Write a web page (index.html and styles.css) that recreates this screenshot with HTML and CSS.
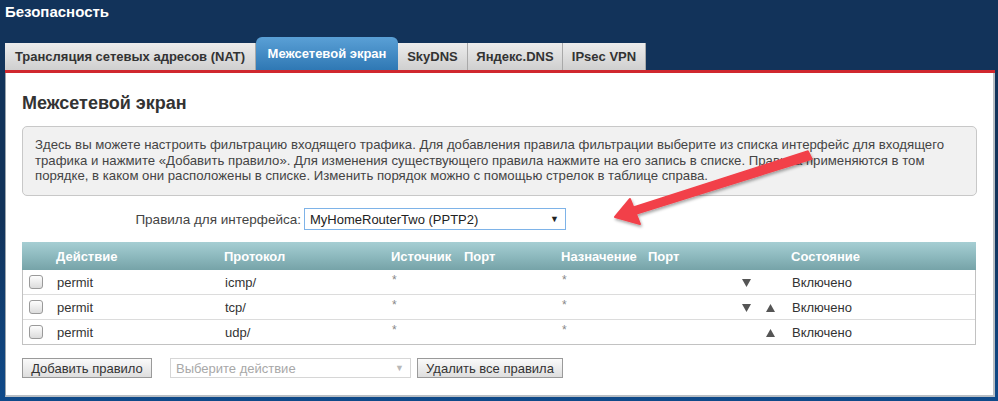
FILE: index.html
```html
<!DOCTYPE html>
<html lang="ru">
<head>
  <meta charset="UTF-8">
  <title>Безопасность</title>
  <link rel="stylesheet" href="styles.css">
</head>
<body>

<div class="page">
  <h1 class="page-title">Безопасность</h1>

  <div class="tabs">
    <div class="tab">Трансляция сетевых адресов (NAT)</div>
    <div class="tab active">Межсетевой экран</div>
    <div class="tab">SkyDNS</div>
    <div class="tab">Яндекс.DNS</div>
    <div class="tab">IPsec VPN</div>
  </div>

  <div class="panel">
    <h2>Межсетевой экран</h2>

    <div class="info">
      Здесь вы можете настроить фильтрацию входящего трафика. Для добавления правила фильтрации выберите из списка интерфейс для входящего<br>
      трафика и нажмите «Добавить правило». Для изменения существующего правила нажмите на его запись в списке. Правила применяются в том<br>
      порядке, в каком они расположены в списке. Изменить порядок можно с помощью стрелок в таблице справа.
    </div>

    <div class="iface-row">
      <label>Правила для интерфейса:</label>
      <div class="select focus">
        <span>MyHomeRouterTwo (PPTP2)</span>
        <span class="caret">&#9660;</span>
      </div>
    </div>

    <div class="rules">
      <div class="rules-head">
        <div></div>
        <div>Действие</div>
        <div>Протокол</div>
        <div>Источник</div>
        <div>Порт</div>
        <div>Назначение</div>
        <div>Порт</div>
        <div></div>
        <div></div>
        <div>Состояние</div>
      </div>
      <div class="rules-row">
        <div><span class="check"></span></div>
        <div>permit</div>
        <div>icmp/</div>
        <div class="star">*</div>
        <div></div>
        <div class="star">*</div>
        <div></div>
        <div class="arrow"><svg width="9" height="8" viewBox="0 0 9 8"><path d="M0 0H9L4.5 8Z" fill="#555"/></svg></div>
        <div class="arrow"></div>
        <div>Включено</div>
      </div>
      <div class="rules-row">
        <div><span class="check"></span></div>
        <div>permit</div>
        <div>tcp/</div>
        <div class="star">*</div>
        <div></div>
        <div class="star">*</div>
        <div></div>
        <div class="arrow"><svg width="9" height="8" viewBox="0 0 9 8"><path d="M0 0H9L4.5 8Z" fill="#555"/></svg></div>
        <div class="arrow"><svg width="9" height="8" viewBox="0 0 9 8"><path d="M0 8H9L4.5 0Z" fill="#555"/></svg></div>
        <div>Включено</div>
      </div>
      <div class="rules-row">
        <div><span class="check"></span></div>
        <div>permit</div>
        <div>udp/</div>
        <div class="star">*</div>
        <div></div>
        <div class="star">*</div>
        <div></div>
        <div class="arrow"></div>
        <div class="arrow"><svg width="9" height="8" viewBox="0 0 9 8"><path d="M0 8H9L4.5 0Z" fill="#555"/></svg></div>
        <div>Включено</div>
      </div>
    </div>

    <div class="actions">
      <button class="btn">Добавить правило</button>
      <div class="select disabled">
        <span>Выберите действие</span>
        <span class="caret">&#9660;</span>
      </div>
      <button class="btn">Удалить все правила</button>
    </div>
  </div>
</div>

<svg class="callout" width="998" height="401" viewBox="0 0 998 401">
  <defs>
    <filter id="sh" x="-10%" y="-10%" width="120%" height="130%">
      <feDropShadow dx="1" dy="2" stdDeviation="1.5" flood-color="#000" flood-opacity="0.35"/>
    </filter>
  </defs>
  <g filter="url(#sh)" fill="#f2414a">
    <path d="M808 151 L812 159 L636 214 L634 207 Z" stroke="#f2414a" stroke-width="1.5" stroke-linejoin="round"/>
    <path d="M615 217 L630 199 L640 224 Z" stroke="#f2414a" stroke-width="2" stroke-linejoin="round"/>
  </g>
</svg>

</body>
</html>
```

FILE: styles.css
```css
:root {
  --navy: #12335a;
  --text: #333333;
  --red: #d0282e;
  --cols: 28px 168px 167px 73px 97px 87px 93px 24px 26px 1fr;
}
body {
  margin: 0;
  height: 401px;
  overflow: hidden;
  background: linear-gradient(to bottom, #12335a 0%, #12335a 55%, #0f4a8a 100%);
  font-family: "Liberation Sans", Arial, sans-serif;
  font-size: 13px;
  color: var(--text);
  position: relative;
}
.page {
  padding: 0 0 0 5px;
  width: 990px;
}
.page-title {
  margin: 0;
  padding: 3px 0 0 0;
  height: 37px;
  box-sizing: border-box;
  color: #fff;
  font-size: 15px;
  font-weight: bold;
  line-height: 17px;
}

/* tabs */
.tabs {
  display: flex;
  align-items: flex-end;
  height: 33px;
  border-bottom: 3px solid var(--red);
}
.tab {
  height: 27px;
  box-sizing: border-box;
  line-height: 28px;
  font-weight: bold;
  font-size: 13px;
  color: #333;
  background: linear-gradient(to bottom, #ececec, #cfcfcf);
  border-right: 1px solid #a9a9a9;
  text-align: center;
}
.tab:first-child { width: 251px; }
.tab.active {
  height: 33px;
  line-height: 33px;
  width: 142px;
  color: #fff;
  background: linear-gradient(to bottom, #5aa0d6, #2f78b4);
  border-right: none;
  border-radius: 6px 6px 0 0;
}
.tab:nth-child(3) { width: 70px; }
.tab:nth-child(4) { width: 95px; }
.tab:nth-child(5) { width: 83px; }

/* panel */
.panel {
  background: #fff;
  border-left: 1px solid #9aa4ad;
  border-right: 2px solid #b8bec4;
  border-bottom: 2px solid #b8bec4;
  height: 324px;
  box-sizing: border-box;
  padding: 0 17px 0 16px;
}
h2 {
  margin: 0;
  padding: 20px 0 0 0;
  height: 53px;
  box-sizing: border-box;
  font-size: 18px;
  font-weight: bold;
  color: #333;
  line-height: 20px;
}
.info {
  background: #f1f1f1;
  border: 1px solid #c8c8c8;
  border-radius: 5px;
  padding: 10px 12px 0 12px;
  height: 70px;
  box-sizing: border-box;
  font-size: 13.2px;
  line-height: 15.5px;
  color: #444;
  width: 955px;
  white-space: nowrap;
}

.iface-row {
  display: flex;
  align-items: center;
  margin-top: 12px;
  height: 22px;
}
.iface-row label {
  width: 279px;
  text-align: right;
  padding-right: 3px;
  font-size: 13.5px;
  color: #444;
}
.select {
  display: flex;
  justify-content: space-between;
  align-items: center;
  box-sizing: border-box;
  height: 22px;
  border: 1px solid #b5b5b5;
  background: #fff;
  padding: 0 6px 0 5px;
  font-size: 13px;
}
.select.focus {
  width: 262px;
  border-color: #7eb3e8;
  color: #222;
}
.select .caret { font-size: 9px; color: #222; }
.select.disabled {
  width: 241px;
  border-color: #d6d6d6;
  color: #a8a8a8;
}
.select.disabled .caret { color: #b8b8b8; }

/* rules table */
.rules {
  margin-top: 12px;
  width: 954px;
  box-sizing: border-box;
  border: 1px solid #c2c2c2;
  border-top: none;
}
.rules-head,
.rules-row {
  display: grid;
  grid-template-columns: var(--cols);
  align-items: center;
}
.rules-head {
  height: 28px;
  color: #fff;
  font-weight: bold;
  background: linear-gradient(to bottom, #a6ced3, #8bb7bc 55%, #76a3a8);
  margin: 0 -1px;
}
.rules-head > div { padding-left: 6px; }
.rules-head > div:first-child { padding-left: 0; }
.rules-row {
  height: 25px;
  box-sizing: border-box;
  border-top: 1px solid #dcdcdc;
}
.rules-head + .rules-row { border-top: none; height: 24px; }
.rules-row > div {
  padding-left: 6px;
  white-space: nowrap;
}
.rules-row .star {
  align-self: start;
  padding-top: 3px;
  color: #888;
  font-size: 12px;
}
.rules-row .arrow { padding-left: 0; }
.rules-row .arrow svg { display: block; margin: 1px 0 0 6px; }
.check {
  display: block;
  width: 12px;
  height: 12px;
  border: 1px solid #9a9a9a;
  border-radius: 3px;
  background: linear-gradient(to bottom, #fdfdfd, #dcdcdc);
}

.actions {
  display: flex;
  align-items: center;
  gap: 6px;
  margin-top: 13px;
}
.btn {
  height: 20px;
  box-sizing: border-box;
  padding: 0 7px;
  font-family: "Liberation Sans", Arial, sans-serif;
  font-size: 13px;
  color: #333;
  border: 1px solid #9a9a9a;
  background: linear-gradient(to bottom, #fafafa, #dedede);
  border-radius: 0;
}
.actions .btn:first-child { width: 130px; margin-right: 12px; }
.actions .select.disabled { height: 20px; }
.actions .btn:last-child { width: 146px; }

.callout {
  position: absolute;
  left: 0;
  top: 0;
  pointer-events: none;
}
```
